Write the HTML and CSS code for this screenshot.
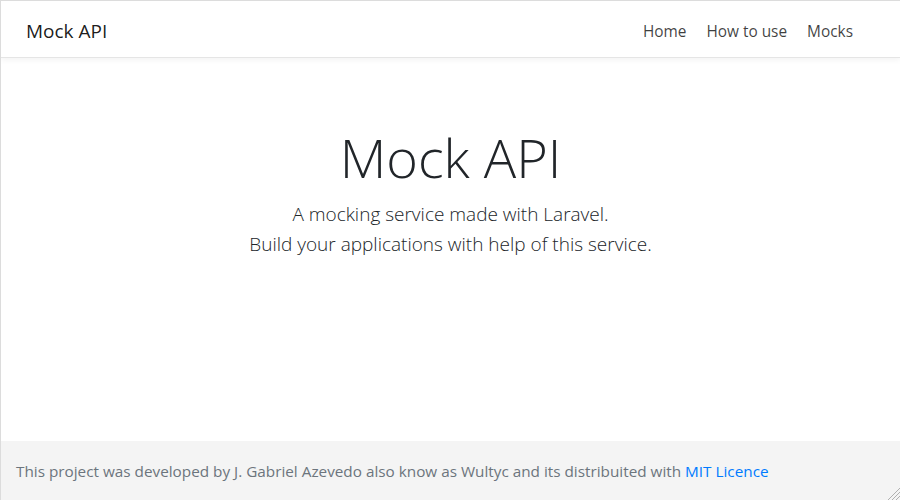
FILE: index.html
```html
<!DOCTYPE html>
<html lang="en">
<head>
<meta charset="utf-8">
<title>Mock API</title>
<link rel="stylesheet" href="styles.css">
</head>
<body>
<div class="frame">
  <nav class="navbar">
    <a class="brand" href="#">Mock API</a>
    <ul class="nav-links">
      <li><a href="#">Home</a></li>
      <li><a href="#">How to use</a></li>
      <li><a href="#">Mocks</a></li>
    </ul>
  </nav>
  <main class="hero">
    <h1 class="display">Mock API</h1>
    <p class="lead">A mocking service made with Laravel.<br>Build your applications with help of this service.</p>
  </main>
  <footer class="footer">
    <p>This project was developed by J. Gabriel Azevedo also know as Wultyc and its distribuited with <a href="#">MIT Licence</a></p>
    <svg class="grip" width="14" height="14" viewBox="0 0 14 14">
      <line x1="14" y1="2" x2="2" y2="14" stroke="#b0b0b0" stroke-width="1"/>
      <line x1="14" y1="6" x2="6" y2="14" stroke="#b0b0b0" stroke-width="1"/>
      <line x1="14" y1="10" x2="10" y2="14" stroke="#b0b0b0" stroke-width="1"/>
    </svg>
  </footer>
</div>
</body>
</html>
```
FILE: styles.css
```css
* { box-sizing: border-box; }
html, body { margin: 0; padding: 0; }
body {
  font-family: "Open Sans", "Noto Sans", sans-serif;
  color: #212529;
  background: #fff;
}
.frame {
  height: 500px;
  border-top: 1px solid #dcdcdc;
  border-left: 1px solid #dcdcdc;
  display: flex;
  flex-direction: column;
  overflow: hidden;
}
.navbar {
  height: 57px;
  flex: none;
  display: flex;
  align-items: center;
  justify-content: space-between;
  padding: 4px 37px 0 25px;
  border-bottom: 1px solid #e5e5e5;
  box-shadow: 0 2px 6px rgba(0,0,0,0.05);
  position: relative;
  z-index: 1;
}
.brand {
  font-size: 19px;
  color: rgba(0,0,0,0.9);
  text-decoration: none;
}
.nav-links {
  list-style: none;
  margin: 0;
  padding: 0;
  display: flex;
}
.nav-links a {
  display: block;
  padding: 8px 10px;
  font-size: 15.4px;
  color: rgba(0,0,0,0.75);
  text-decoration: none;
}
.hero {
  flex: 1;
  text-align: center;
  padding-top: 67px;
}
.display {
  margin: 0 0 9px;
  font-size: 54px;
  font-weight: 300;
  line-height: 1.2;
}
.lead {
  margin: 0;
  font-size: 19px;
  font-weight: 300;
  line-height: 30px;
}
.footer {
  height: 59px;
  flex: none;
  background: #f4f4f4;
  display: flex;
  align-items: center;
  padding: 1px 15px 0;
  position: relative;
}
.footer p {
  margin: 0;
  font-size: 15.3px;
  color: #6c757d;
}
.footer a {
  color: #007bff;
  text-decoration: none;
}
.grip {
  position: absolute;
  right: 0;
  bottom: 0;
}
```
